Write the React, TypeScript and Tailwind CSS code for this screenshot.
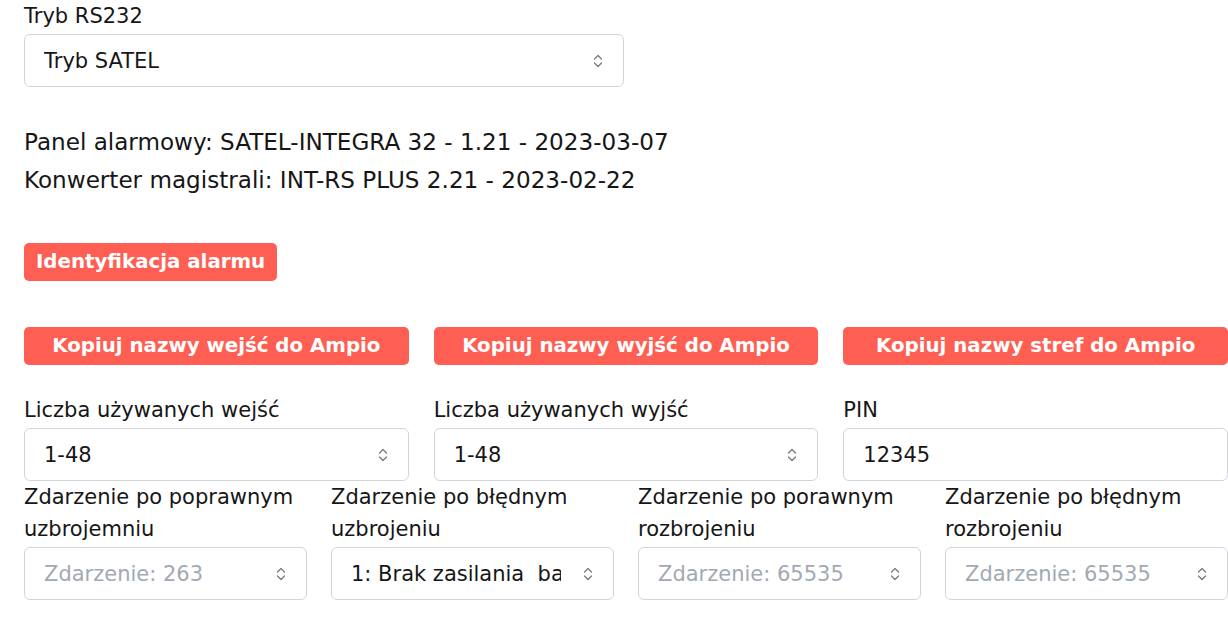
import React from "react";

const font = { fontFamily: '"DejaVu Sans", sans-serif' };

function Chevrons() {
  return (
    <svg width="10" height="16" viewBox="0 0 10 16" fill="none" className="shrink-0">
      <path d="M1.5 6 L5 2.5 L8.5 6" stroke="#767b84" strokeWidth="1.3" strokeLinecap="round" strokeLinejoin="round" />
      <path d="M1.5 10 L5 13.5 L8.5 10" stroke="#767b84" strokeWidth="1.3" strokeLinecap="round" strokeLinejoin="round" />
    </svg>
  );
}

function SelectBox({ value, placeholder = false, className = "" }: { value: string; placeholder?: boolean; className?: string }) {
  return (
    <div className={`mt-[2px] flex h-[53px] items-center rounded-[6px] border border-[#d1d5db] bg-white pl-[19px] pr-[20px] ${className}`}>
      <div className={`mr-[22px] min-w-0 flex-1 overflow-hidden whitespace-pre pt-[2px] text-[21px] ${placeholder ? "text-[#a3a9b2]" : "text-[#161616]"}`}>
        {value}
      </div>
      <Chevrons />
    </div>
  );
}

function Label({ children }: { children: React.ReactNode }) {
  return <div className="text-[21px] leading-[32px] text-[#161616]">{children}</div>;
}

function RedButton({ children, className = "" }: { children: React.ReactNode; className?: string }) {
  return (
    <div className={`flex h-[38px] items-center justify-center rounded-[5px] bg-[#ff5e52] text-[19.8px] font-bold text-white ${className}`}>
      {children}
    </div>
  );
}

export default function App() {
  return (
    <div className="w-[1228px] h-[631px] overflow-hidden bg-white" style={font}>
      <div className="w-[1204px] ml-[24px]">
        <div className="w-[600px]">
          <Label>Tryb RS232</Label>
          <SelectBox value="Tryb SATEL" />
        </div>

        <div className="mt-[36px] text-[23.1px] leading-[38px] text-[#161616]">
          <div>Panel alarmowy: SATEL-INTEGRA 32 - 1.21 - 2023-03-07</div>
          <div>Konwerter magistrali: INT-RS PLUS 2.21 - 2023-02-22</div>
        </div>

        <div className="mt-[44px] flex">
          <RedButton className="px-[12px]">Identyfikacja alarmu</RedButton>
        </div>

        <div className="mt-[46px] grid grid-cols-3 gap-x-[25px]">
          <RedButton>Kopiuj nazwy wejść do Ampio</RedButton>
          <RedButton>Kopiuj nazwy wyjść do Ampio</RedButton>
          <RedButton>Kopiuj nazwy stref do Ampio</RedButton>
        </div>

        <div className="mt-[29px] grid grid-cols-3 gap-x-[25px]">
          <div>
            <Label>Liczba używanych wejść</Label>
            <SelectBox value="1-48" />
          </div>
          <div>
            <Label>Liczba używanych wyjść</Label>
            <SelectBox value="1-48" />
          </div>
          <div>
            <Label>PIN</Label>
            <div className="mt-[2px] flex h-[53px] items-center rounded-[6px] border border-[#d1d5db] bg-white pl-[19px] pt-[2px] text-[21px] text-[#161616]">
              12345
            </div>
          </div>
        </div>

        <div className="grid grid-cols-4 gap-x-[24px]">
          <div>
            <Label>Zdarzenie po poprawnym uzbrojemniu</Label>
            <SelectBox value="Zdarzenie: 263" placeholder />
          </div>
          <div>
            <Label>Zdarzenie po błędnym uzbrojeniu</Label>
            <SelectBox value="1: Brak zasilania  baterii akumulatora" />
          </div>
          <div>
            <Label>Zdarzenie po porawnym rozbrojeniu</Label>
            <SelectBox value="Zdarzenie: 65535" placeholder />
          </div>
          <div>
            <Label>Zdarzenie po błędnym rozbrojeniu</Label>
            <SelectBox value="Zdarzenie: 65535" placeholder />
          </div>
        </div>
      </div>
    </div>
  );
}
